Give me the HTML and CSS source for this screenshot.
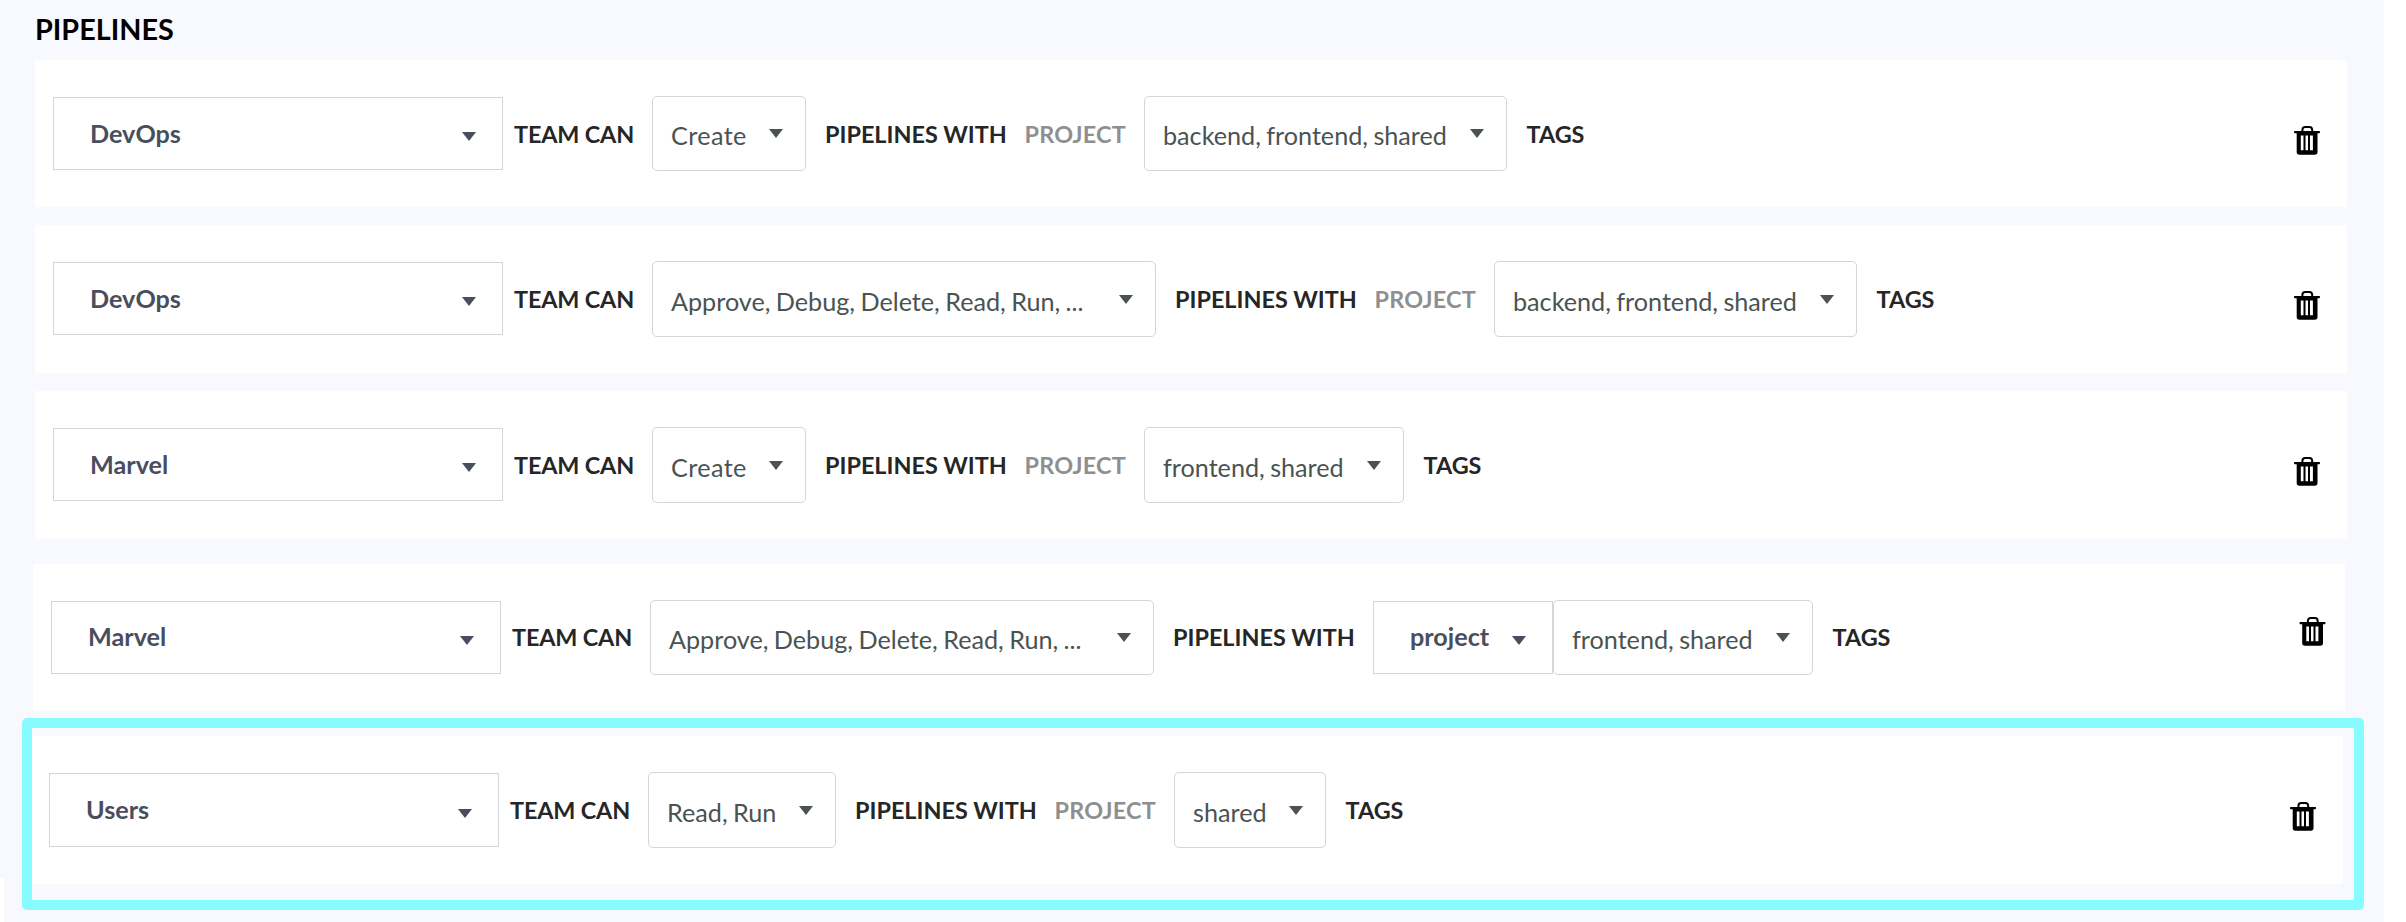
FILE: index.html
```html
<!DOCTYPE html>
<html lang="en">
<head>
<meta charset="utf-8">
<title>Pipelines</title>
<link rel="stylesheet" href="styles.css">
</head>
<body>
<svg class="defs" aria-hidden="true">
  <symbol id="trash" viewBox="0 0 26 29">
    <path d="M8.4 5.6V3.6Q8.9 1.1 11 1.1H15.6Q17.700 1.100 18.2 3.6V5.6" fill="none" stroke="#000" stroke-width="2"/>
    <path fill="#000" fill-rule="evenodd" d="M0.600 5H25.400Q26 5 26 6T25.400 7.300H23.500V26Q23.500 28.700 20.800 28.700H5.400Q2.700 28.700 2.700 26V7.300H0.600Q0 7 0 6T0.600 5ZM6.800 9.500V24.200H9.500V9.500ZM11.500 9.500V24.200H14V9.500ZM16 9.500V24.200H18.900V9.500Z"/>
  </symbol>
</svg>
<main class="page">
  <h1 class="title">PIPELINES</h1>

  <section class="rule">
    <div class="select team">DevOps<i class="caret"></i></div>
    <span class="label can">TEAM CAN</span>
    <div class="box create">Create<i class="caret"></i></div>
    <span class="label with">PIPELINES WITH</span>
    <span class="label project">PROJECT</span>
    <div class="box tags-all">backend, frontend, shared<i class="caret"></i></div>
    <span class="label tags">TAGS</span>
    <svg class="trash"><use href="#trash"/></svg>
  </section>

  <section class="rule tall">
    <div class="select team">DevOps<i class="caret"></i></div>
    <span class="label can">TEAM CAN</span>
    <div class="box actions">Approve, Debug, Delete, Read, Run, ...<i class="caret"></i></div>
    <span class="label with">PIPELINES WITH</span>
    <span class="label project">PROJECT</span>
    <div class="box tags-all">backend, frontend, shared<i class="caret"></i></div>
    <span class="label tags">TAGS</span>
    <svg class="trash"><use href="#trash"/></svg>
  </section>

  <section class="rule tall">
    <div class="select team">Marvel<i class="caret"></i></div>
    <span class="label can">TEAM CAN</span>
    <div class="box create">Create<i class="caret"></i></div>
    <span class="label with">PIPELINES WITH</span>
    <span class="label project">PROJECT</span>
    <div class="box tags-two">frontend, shared<i class="caret"></i></div>
    <span class="label tags">TAGS</span>
    <svg class="trash"><use href="#trash"/></svg>
  </section>

  <section class="rule shifted">
    <div class="select team">Marvel<i class="caret"></i></div>
    <span class="label can">TEAM CAN</span>
    <div class="box actions">Approve, Debug, Delete, Read, Run, ...<i class="caret"></i></div>
    <span class="label with">PIPELINES WITH</span>
    <div class="select attribute">project<i class="caret"></i></div>
    <div class="box tags-two">frontend, shared<i class="caret"></i></div>
    <span class="label tags">TAGS</span>
    <svg class="trash"><use href="#trash"/></svg>
  </section>

  <div class="highlight">
    <section class="rule tall">
      <div class="select team">Users<i class="caret"></i></div>
      <span class="label can">TEAM CAN</span>
      <div class="box read-run">Read, Run<i class="caret"></i></div>
      <span class="label with">PIPELINES WITH</span>
      <span class="label project">PROJECT</span>
      <div class="box tags-one">shared<i class="caret"></i></div>
      <span class="label tags">TAGS</span>
      <svg class="trash"><use href="#trash"/></svg>
    </section>
  </div>
</main>
</body>
</html>
```
FILE: styles.css
```css
* { box-sizing: border-box; }

body {
  margin: 0;
  background: #fff;
  font-family: Lato, sans-serif;
  overflow: hidden;
}

.defs { display: block; width: 0; height: 0; }

.page {
  position: relative;
  width: 2384px;
  height: 922px;
  padding-left: 35px;
  background: #f8f9ff;
}

/* lower edge of the neighbouring panel */
.page::before {
  content: "";
  position: absolute;
  left: 0;
  bottom: 0;
  width: 4px;
  height: 44px;
  background: #fff;
}

.title {
  margin: 0;
  height: 60px;
  line-height: 58px;
  font-size: 28.8px;
  font-weight: 700;
  color: #000;
}

.rule {
  display: flex;
  align-items: flex-start;
  width: 2312px;
  height: 147px;
  margin-bottom: 18px;
  padding-left: 18px;
  background: #fff;
  white-space: nowrap;
}

.rule.tall { height: 148px; }

.select {
  display: flex;
  flex: none;
  align-items: center;
  justify-content: space-between;
  height: 73px;
  margin-top: 37px;
  padding: 0 26px 2px 36px;
  border: 1px solid #d3d5dc;
  font-size: 25.2px;
  font-weight: 700;
  color: #494e5e;
}

.select .caret { margin-top: 8px; }
.team { width: 450px; }
.attribute { width: 180px; }

.box {
  display: flex;
  flex: none;
  align-items: center;
  justify-content: space-between;
  height: 75px;
  margin-top: 36px;
  padding: 3px 22px 0 18px;
  border: 1px solid #d4d5d7;
  border-radius: 5px;
  font-size: 25.2px;
  word-spacing: -1.1px;
  color: #4a5351;
}

.box .caret { margin-bottom: 4px; }
.tall .box { height: 76px; padding-top: 4px; }
.create { width: 154px; letter-spacing: 0.4px; }
.actions { width: 504px; }
.read-run { width: 188px; }
.tags-all { width: 363px; }
.tags-two { width: 260px; }
.tags-one { width: 152px; }

.caret {
  border: 7.5px solid transparent;
  border-top: 9px solid currentColor;
  border-bottom: 0;
}

.label {
  flex: none;
  height: 148px;
  line-height: 148px;
  font-size: 23.4px;
  font-weight: 700;
  color: #262626;
}

.can { width: 149px; padding-left: 11px; letter-spacing: -0.15px; }
.with { width: 218px; padding-left: 19px; }
.project { width: 120px; padding-left: 0.5px; letter-spacing: 0.2px; color: #8f8f8f; }
.tags { padding-left: 19.5px; }

.trash {
  flex: none;
  width: 26px;
  height: 29px;
  margin: 66px 27px 0 auto;
}

.shifted { margin: 25px 0 7px -2px; }
.shifted .label { line-height: 146px; }
.shifted .with { width: 219px; }
.shifted .select { padding-bottom: 3px; }
.shifted .trash { width: 27px; margin: 53px 19px 0 auto; }

.highlight {
  width: 2342px;
  height: 192px;
  margin-left: -13px;
  padding-top: 8px;
  border: 10px solid #87fcff;
  border-radius: 5px;
}

.highlight .rule { width: 2311px; padding-left: 17px; }
.highlight .team { height: 74px; }
```
